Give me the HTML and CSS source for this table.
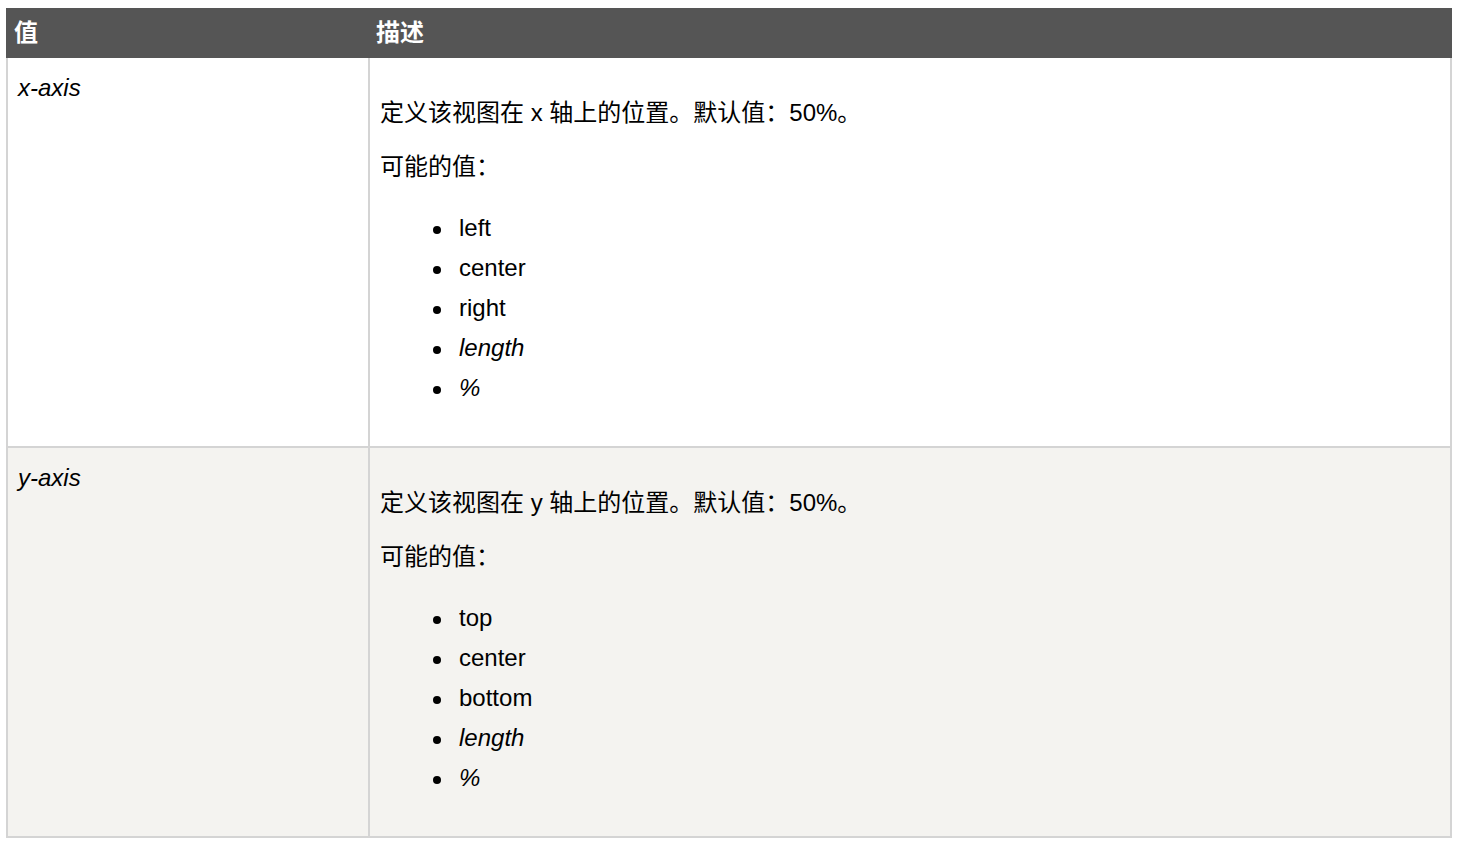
FILE: index.html
```html
<!DOCTYPE html>
<html lang="zh">
<head>
<meta charset="utf-8">
<title>值与描述</title>
<link rel="stylesheet" href="styles.css">
</head>
<body>
<table class="ref-table">
  <thead>
    <tr>
      <th class="col-value">值</th>
      <th class="col-desc">描述</th>
    </tr>
  </thead>
  <tbody>
    <tr class="row-odd">
      <td class="cell-value"><em>x-axis</em></td>
      <td class="cell-desc">
        <p class="desc-first">定义该视图在 x 轴上的位置。默认值：50%。</p>
        <p>可能的值：</p>
        <ul class="values">
          <li>left</li>
          <li>center</li>
          <li>right</li>
          <li><em>length</em></li>
          <li><em>%</em></li>
        </ul>
      </td>
    </tr>
    <tr class="row-even">
      <td class="cell-value"><em>y-axis</em></td>
      <td class="cell-desc">
        <p class="desc-first">定义该视图在 y 轴上的位置。默认值：50%。</p>
        <p>可能的值：</p>
        <ul class="values">
          <li>top</li>
          <li>center</li>
          <li>bottom</li>
          <li><em>length</em></li>
          <li><em>%</em></li>
        </ul>
      </td>
    </tr>
  </tbody>
</table>
</body>
</html>
```
FILE: styles.css
```css
html, body {
  margin: 0;
  padding: 0;
  background: #ffffff;
}

body {
  font-family: "Liberation Sans", "Noto Sans CJK SC", Arial, sans-serif;
  font-size: 24px;
  line-height: 40px;
  color: #000000;
}

.ref-table {
  margin: 8px 10px 0 6px;
  width: calc(100% - 16px);
  border-collapse: separate;
  border-spacing: 0;
  table-layout: fixed;
}

.ref-table th,
.ref-table td {
  box-sizing: border-box;
  text-align: left;
  vertical-align: top;
}

.ref-table th {
  background: #555555;
  color: #ffffff;
  font-weight: bold;
  padding: 5px 6px;
  border-right: 2px solid #555555;
}

.ref-table th.col-value {
  width: 364px;
  border-left: 2px solid #555555;
}

.ref-table td {
  padding: 8px 10px;
  border-right: 2px solid #d4d4d4;
  border-bottom: 2px solid #d4d4d4;
}

.ref-table td.cell-value {
  padding-top: 10px;
  border-left: 2px solid #d4d4d4;
}

.row-odd td {
  background: #ffffff;
}

.row-even td {
  background: #f4f3f0;
}

.cell-desc p {
  margin: 14px 0 0;
}

.cell-desc p.desc-first {
  margin-top: 27px;
}

.values {
  margin: 21px 0 30px;
  padding: 0 0 0 79px;
  list-style: none;
}

.values li::before {
  content: "";
  display: inline-block;
  width: 8px;
  height: 8px;
  border-radius: 50%;
  background: #000000;
  margin-left: -26px;
  margin-right: 18px;
  vertical-align: middle;
}

em {
  font-style: italic;
}
```
